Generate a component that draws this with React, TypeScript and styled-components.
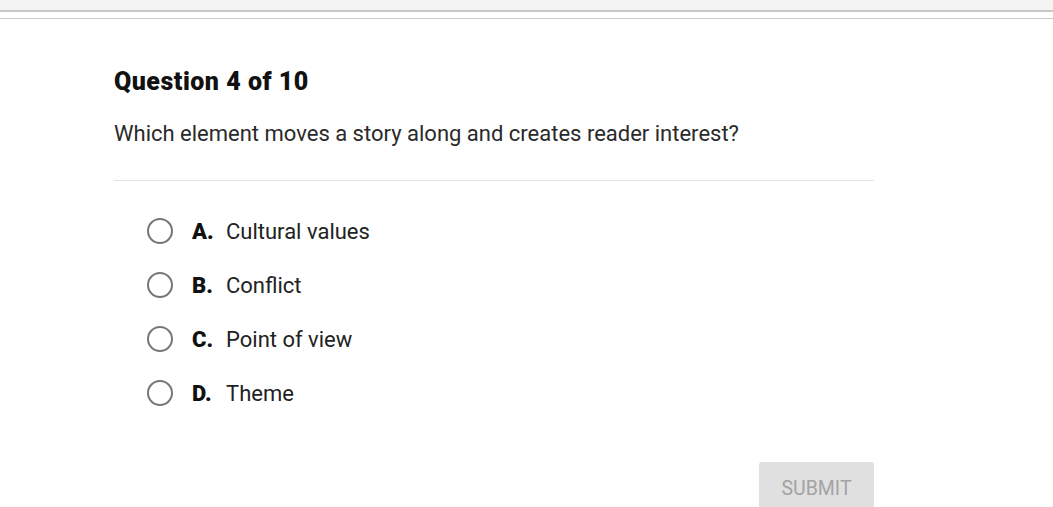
import React from "react";
import styled, { createGlobalStyle } from "styled-components";

const GlobalStyle = createGlobalStyle`
  html, body {
    margin: 0;
    padding: 0;
    background: #fff;
    font-family: Roboto, "Liberation Sans", sans-serif;
    overflow: hidden;
  }
`;

const options = [
  { letter: "A.", text: "Cultural values" },
  { letter: "B.", text: "Conflict" },
  { letter: "C.", text: "Point of view" },
  { letter: "D.", text: "Theme" },
];

export default function App() {
  return (
    <>
      <GlobalStyle />
      <TopBar />
      <Rule />
      <Page>
        <Heading>Question 4 of 10</Heading>
        <Prompt>Which element moves a story along and creates reader interest?</Prompt>
        <Divider />
        <Options>
          {options.map((o) => (
            <Option key={o.letter}>
              <Radio />
              <Letter>{o.letter}</Letter>
              <Answer>{o.text}</Answer>
            </Option>
          ))}
        </Options>
        <Footer>
          <Submit disabled>SUBMIT</Submit>
        </Footer>
      </Page>
    </>
  );
}

const TopBar = styled.div`
  height: 10px;
  background: #f4f4f4;
  border-bottom: 2px solid #c9c9c9;
`;

const Rule = styled.div`
  height: 6px;
  border-bottom: 1px solid #cacaca;
`;

const Page = styled.div`
  width: 760px;
  margin-left: 114px;
  padding-top: 50px;
`;

const Heading = styled.h2`
  margin: 0;
  font-size: 25px;
  font-weight: 900;
  letter-spacing: 0.5px;
  color: #111;
  line-height: 26px;
`;

const Prompt = styled.p`
  margin: 26px 0 0;
  font-size: 22px;
  color: #2a2a2a;
  line-height: 26px;
`;

const Divider = styled.hr`
  margin: 33px 0 0;
  border: none;
  border-top: 1px solid #e4e4e4;
`;

const Options = styled.div`
  display: flex;
  flex-direction: column;
  gap: 24px;
  margin-top: 35px;
  padding-left: 33px;
`;

const Option = styled.label`
  display: flex;
  align-items: center;
  height: 30px;
  cursor: pointer;
`;

const Radio = styled.span`
  box-sizing: border-box;
  width: 26px;
  height: 26px;
  border-radius: 50%;
  border: 2.5px solid #767676;
  margin-right: 19px;
`;

const Letter = styled.span`
  font-size: 22px;
  font-weight: 900;
  color: #111;
  width: 34px;
`;

const Answer = styled.span`
  font-size: 22px;
  color: #222;
`;

const Footer = styled.div`
  display: flex;
  justify-content: flex-end;
  margin-top: 54px;
`;

const Submit = styled.button`
  width: 115px;
  height: 48px;
  border: none;
  border-radius: 3px;
  background: #e0e0e0;
  color: #a3a3a3;
  font-family: Roboto, "Liberation Sans", sans-serif;
  font-size: 19.5px;
  padding: 4px 0 0;
`;
